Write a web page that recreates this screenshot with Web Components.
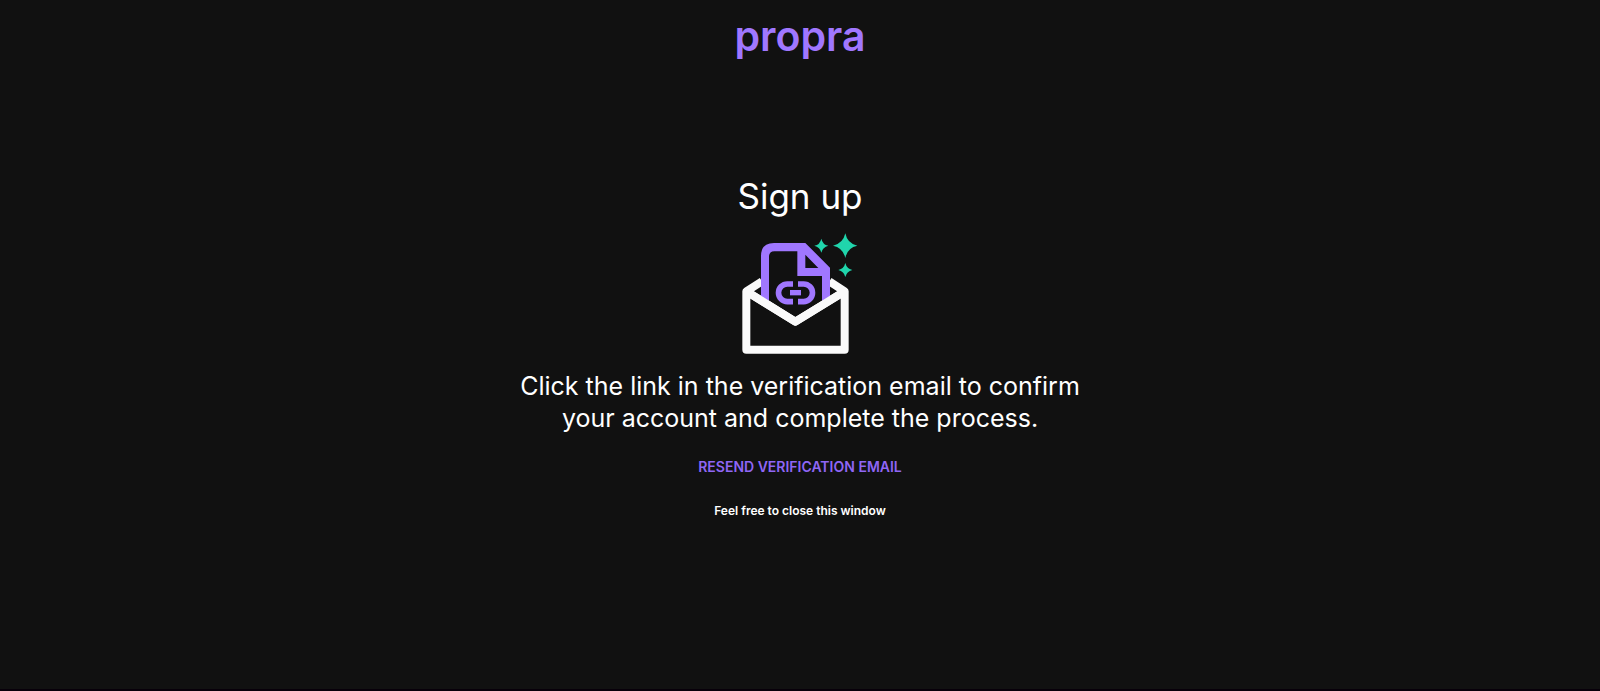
<!DOCTYPE html>
<html lang="en">
<head>
<meta charset="utf-8">
<title>Sign up</title>
<style>
html, body { margin: 0; height: 100%; background: #111; }
body { color: #fff; font-family: Inter, "Liberation Sans", sans-serif; }
</style>
</head>
<body>
<signup-page>
  <brand-logo slot="header">propra</brand-logo>
  <verify-message heading="Sign up">
    <mail-icon slot="art"></mail-icon>
    Click the link in the verification email to confirm your account and complete the process.
    <resend-button slot="action">Resend verification email</resend-button>
    <span slot="note">Feel free to close this window</span>
  </verify-message>
</signup-page>
<script>
class BaseElement extends HTMLElement {
  constructor() {
    super();
    this.attachShadow({ mode: "open" }).innerHTML = this.constructor.markup;
  }
}

customElements.define("signup-page", class extends BaseElement {
  static markup = `
    <style>
      :host { display: flex; flex-direction: column; box-sizing: border-box; min-height: 100%; border-bottom: 2px solid #08000a; }
      header { display: flex; justify-content: center; padding-top: 12px; }
      main { display: flex; justify-content: center; padding: 108px 24px 0; }
    </style>
    <header><slot name="header"></slot></header>
    <main><slot></slot></main>`;
});

customElements.define("brand-logo", class extends BaseElement {
  static markup = `
    <style>
      :host { display: block; color: #a077ff; font-size: 41px; line-height: 48px; font-weight: 600; }
    </style>
    <slot></slot>`;
});

customElements.define("mail-icon", class extends BaseElement {
  static markup = `
    <style>
      :host { display: block; }
      svg { display: block; width: 140px; height: 135px; }
    </style>
    <svg viewBox="0 0 420 405" aria-hidden="true">
      <g fill="none" stroke="#fafafa" stroke-width="24" stroke-linejoin="round">
        <path d="M96 169 L49 199 V374 H344 V199 L298 169"/>
        <path d="M49 199 L196 290 L344 199"/>
      </g>
      <path fill="#111" d="M94 54 H230 L300 124 V226 L277 226 L196 275 L117 226 L94 226Z"/>
      <path fill="#a077ff" fill-rule="evenodd" d="M93 225 V93 Q93 54 132 54 H226 L300 128 V224 L276 240 V153 H202 V79 H133 Q117 79 117 95 V240Z M226 89 V129 H265Z"/>
      <path fill="none" stroke="#fafafa" stroke-width="24" stroke-linejoin="round" d="M49 199 L196 290 L344 199"/>
      <g fill="none" stroke="#a077ff" stroke-width="17">
        <path d="M189 177 H172 A26 26 0 0 0 172 230 H189"/>
        <path d="M204 177 H221 A26 26 0 0 1 221 230 H204"/>
      </g>
      <path fill="#a077ff" d="M180 195 H213 V211 H180Z"/>
      <g fill="#20d5ac">
        <path d="M346 25 Q352 56 382 62 Q352 68 346 99 Q339 68 309 62 Q339 56 346 25Z"/>
        <path d="M274 41 Q278 59 295 62 Q278 66 274 83 Q270 66 253 62 Q270 59 274 41Z"/>
        <path d="M346 114 Q350 131 367 135 Q350 139 346 156 Q342 139 325 135 Q342 131 346 114Z"/>
      </g>
    </svg>`;
});

customElements.define("resend-button", class extends BaseElement {
  static markup = `
    <style>
      :host { display: block; }
      button { display: block; margin: 0; padding: 8px; border: 0; background: none; color: #8f66f5; font: 600 14px/20px Inter, "Liberation Sans", sans-serif; text-transform: uppercase; cursor: pointer; }
    </style>
    <button type="button"><slot></slot></button>`;
});

customElements.define("verify-message", class extends BaseElement {
  static markup = `
    <style>
      :host { display: flex; flex-direction: column; align-items: center; width: 100%; max-width: 600px; text-align: center; }
      h1 { margin: 0; font-size: 35px; line-height: 56px; font-weight: 400; }
      p { margin: 0; }
      .art { margin-top: 1px; }
      .lead { margin-top: 10px; font-size: 25px; line-height: 32px; }
      .action { margin-top: 15px; }
      .note { margin-top: 16px; font-size: 12px; line-height: 20px; font-weight: 600; }
    </style>
    <h1></h1>
    <div class="art"><slot name="art"></slot></div>
    <p class="lead"><slot></slot></p>
    <div class="action"><slot name="action"></slot></div>
    <p class="note"><slot name="note"></slot></p>`;
  connectedCallback() {
    this.shadowRoot.querySelector("h1").textContent = this.getAttribute("heading");
  }
});
</script>
</body>
</html>
